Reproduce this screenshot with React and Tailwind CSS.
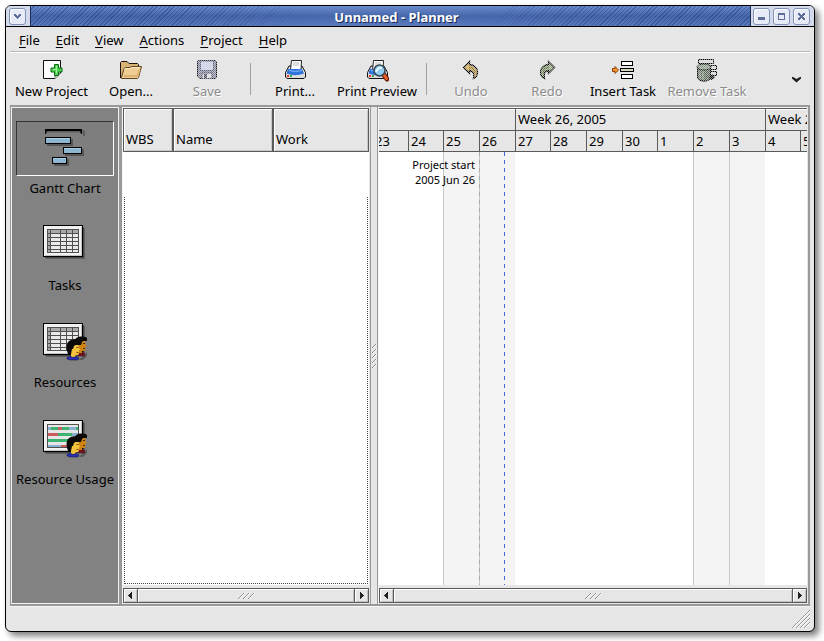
import React from "react";

const menus = ["File", "Edit", "View", "Actions", "Project", "Help"];

const days = [
  { label: "23", width: 36 },
  { label: "24", width: 35 },
  { label: "25", width: 36, off: true },
  { label: "26", width: 36, off: true },
  { label: "27", width: 35 },
  { label: "28", width: 36 },
  { label: "29", width: 36 },
  { label: "30", width: 35 },
  { label: "1", width: 36 },
  { label: "2", width: 36, off: true },
  { label: "3", width: 36, off: true },
  { label: "4", width: 35 },
  { label: "5", width: 36 },
];

const weeks = [
  { label: "", width: 143 },
  { label: "Week 26, 2005", width: 250 },
  { label: "Week 27, 2005", width: 250 },
];

function Icon({ children, size = 24 }) {
  return (
    <svg width={size} height={size} viewBox={`0 0 ${size} ${size}`} className="block shrink-0" aria-hidden="true">
      {children}
    </svg>
  );
}

/* Checkerboard laid over the icons of insensitive tools */
function Stipple({ id }) {
  return (
    <defs>
      <pattern id={id} width="2" height="2" patternUnits="userSpaceOnUse">
        <rect width="1" height="1" fill="#e6e6e6" fillOpacity="0.6" shapeRendering="crispEdges" />
        <rect x="1" y="1" width="1" height="1" fill="#e6e6e6" fillOpacity="0.6" shapeRendering="crispEdges" />
      </pattern>
    </defs>
  );
}

function NewIcon() {
  return (
    <Icon>
      <path d="M3.5 2.5H20.5V15L15 20.5H3.5Z" fill="#fdfdfd" stroke="#111" />
      <path d="M15 20.5V15.5H20.5" fill="#ddd" stroke="#777" />
      <path d="M14.5 6.5h4v3.5h3.5v4h-3.5v3.5h-4v-3.5h-3.5v-4h3.5Z" fill="#4fd04f" stroke="#0b6b14" />
      <path d="M16.5 8v7.5M13 11.5h4" stroke="#a5f5a0" />
    </Icon>
  );
}

function OpenIcon() {
  return (
    <Icon>
      <path d="M1.5 20V4.5L2.5 3.5H8L10 5.5H18.5L19.5 6.5V9" fill="#d9b277" stroke="#1a1208" />
      <path d="M2.5 19.5L5 10.5L6.5 9.5H11L13 8.5H22.5L19.5 19.5L18.5 20.5H2.5Z" fill="#f0cd93" stroke="#5c4420" />
      <path d="M5 11.5l1.5-1H11l2-1h8" fill="none" stroke="#fde9c4" />
      <path d="M5 18h13.5l2-6" fill="none" stroke="#dcb273" strokeWidth="2" />
    </Icon>
  );
}

function SaveIcon() {
  return (
    <Icon>
      <Stipple id="stipple-save" />
      <path d="M2.5 3.5l1-1h17l1 1v16l-1 1H4.5l-2-2Z" fill="#84889f" stroke="#16161c" />
      <rect x="5.5" y="3" width="13" height="9.5" fill="#cdd3ea" stroke="#5a5e78" />
      <rect x="7" y="15" width="10" height="5.5" fill="#dfe1ea" stroke="#44475a" />
      <rect x="9" y="16" width="3" height="4" fill="#44475a" />
      <rect x="2" y="2" width="20" height="19" fill="url(#stipple-save)" />
    </Icon>
  );
}

function Printer() {
  return (
    <>
      <path d="M6 8L2.5 14.5V19L4 20.5H21L22.5 19V14.5L19 8Z" fill="#dcdcdf" stroke="#111" />
      <path d="M7.5 12L8.5 2.5H18.5L18 12Z" fill="#fff" stroke="#222" />
      <path d="M10 5h6M10 7h6" stroke="#bbb" />
      <path d="M5 11h14l2 4.5q-9 3.5-17.5 0Z" fill="#2e74dc" />
      <path d="M6 12.5q6 2 13 0" fill="none" stroke="#86b5f5" />
      <rect x="4" y="17" width="2" height="2" fill="#e03528" />
      <rect x="7" y="17" width="2" height="2" fill="#36a543" />
    </>
  );
}

function PrintIcon() {
  return (
    <Icon>
      <Printer />
    </Icon>
  );
}

function PreviewIcon() {
  return (
    <Icon>
      <Printer />
      <path d="M19 17l3 4" stroke="#6f1c08" strokeWidth="5" strokeLinecap="round" />
      <path d="M19 17l2.5 3.5" stroke="#e3602d" strokeWidth="3" strokeLinecap="round" />
      <circle cx="14.5" cy="12.5" r="5.5" fill="#8fcdf2" stroke="#3b474f" strokeWidth="1.5" />
      <path d="M11 14q2-5 6-4" fill="none" stroke="#e9f8ff" strokeWidth="2" />
    </Icon>
  );
}

function UndoIcon() {
  return (
    <Icon>
      <Stipple id="stipple-undo" />
      <path d="M4.5 9.5L10.5 3.5V6.5C15 7 18.5 10 18.5 14C18.5 17 17 19.5 14.5 20.5C15.5 16 14.5 13 10.5 12.5V15.5Z" fill="#d0ab4c" stroke="#000" strokeWidth="1.3" />
      <path d="M10 9.5q6 0 6 6" fill="none" stroke="#8f722a" strokeWidth="1.5" />
      <rect x="4" y="3" width="16" height="18" fill="url(#stipple-undo)" />
    </Icon>
  );
}

function RedoIcon() {
  return (
    <Icon>
      <Stipple id="stipple-redo" />
      <path d="M19.5 9.5L13.5 3.5V6.5C9 7 5.5 10 5.5 14C5.5 17 7 19.5 9.5 20.5C8.5 16 9.5 13 13.5 12.5V15.5Z" fill="#93a878" stroke="#000" strokeWidth="1.3" />
      <path d="M14 9.5q-6 0-6 6" fill="none" stroke="#5a6d44" strokeWidth="1.5" />
      <rect x="4" y="3" width="16" height="18" fill="url(#stipple-redo)" />
    </Icon>
  );
}

function InsertIcon() {
  return (
    <Icon>
      <rect x="10.5" y="3.5" width="11" height="4" fill="#fff" stroke="#000" />
      <rect x="9.5" y="10.5" width="13" height="3" fill="#d5dcbc" stroke="#000" />
      <rect x="10.5" y="16.5" width="11" height="4" fill="#fff" stroke="#000" />
      <path d="M1.5 10.5H4V8.5L7.5 12L4 15.5V13.5H1.5Z" fill="#f59a2e" stroke="#8b3e06" />
    </Icon>
  );
}

function RemoveIcon() {
  return (
    <Icon>
      <Stipple id="stipple-remove" />
      <path d="M3.5 1.5h15v4h-15zM8.5 7.5h13v4h-13zM12.5 13.5h9v4h-9z" fill="#ddd" stroke="#000" />
      <path d="M2.5 9.5V19q0 4 6.5 4t6.5-4V9.5Z" fill="#5c6a5c" stroke="#000" />
      <ellipse cx="9" cy="9" rx="7" ry="3" fill="#8f9c8b" stroke="#111" />
      <path d="M5 13v8M8 13v9" stroke="#9cab9c" />
      <path d="M15 20.5l4-2.500" stroke="#111" strokeWidth="4" />
      <rect x="1" y="1" width="22" height="22" fill="url(#stipple-remove)" />
    </Icon>
  );
}

const tools = [
  { label: "New Project", icon: NewIcon, width: "w-[83px]" },
  { label: "Open...", icon: OpenIcon, width: "w-[76px]" },
  { label: "Save", icon: SaveIcon, width: "w-[76px]", disabled: true },
  null,
  { label: "Print...", icon: PrintIcon, width: "w-[76px]" },
  { label: "Print Preview", icon: PreviewIcon, width: "w-[88px]" },
  null,
  { label: "Undo", icon: UndoIcon, width: "w-[76px]", disabled: true },
  { label: "Redo", icon: RedoIcon, width: "w-[76px]", disabled: true },
  { label: "Insert Task", icon: InsertIcon, width: "w-[76px]" },
  { label: "Remove Task", icon: RemoveIcon, width: "w-[92px]", disabled: true },
];

function GanttIcon() {
  const bars = [
    [4, 13, 26],
    [22, 23, 19],
    [11, 33, 15],
  ];
  return (
    <Icon size={48}>
      <path d="M6 7.5H43V12" fill="none" stroke="#5c5c5c" strokeWidth="2" />
      <path d="M4 5H41V10H40L39 7H6L5 10H4Z" fill="#000" />
      {bars.map(([x, y, w]) => (
        <g key={y} shapeRendering="crispEdges">
          <rect x={x + 2} y={y + 2} width={w} height="7" fill="#555" />
          <rect x={x} y={y} width={w} height="7" fill="#000" />
          <rect x={x + 1} y={y + 1} width={w - 2} height="5" fill="#8cb6d2" />
          <rect x={x + 1} y={y + 1} width={w - 2} height="1" fill="#a9cfe6" />
        </g>
      ))}
    </Icon>
  );
}

function Panel({ y, children }) {
  return (
    <g transform={`translate(2 ${y})`} shapeRendering="crispEdges">
      <rect x="3" y="3" width="39" height="31" fill="#3f3f3f" opacity="0.5" />
      <rect x="2" y="2" width="39" height="31" fill="#4a4a4a" />
      <rect width="40" height="32" fill="#000" />
      <rect x="1" y="1" width="38" height="30" fill="#f1f1ef" />
      <path d="M2 30.5H38.5V2" fill="none" stroke="#c4c4c0" />
      <rect x="4" y="4" width="32" height="24" fill="#505050" />
      {children}
    </g>
  );
}

function Cells() {
  const columns = [
    [5, 2],
    [8, 9],
    [18, 5],
    [24, 5],
    [30, 5],
  ];
  return [5, 9, 13, 17, 21, 25].map((y, row) =>
    columns.map(([x, w], col) => (
      <rect key={`${x}-${y}`} x={x} y={y} width={w} height={row === 5 ? 2 : 3} fill={row === 0 || col === 0 ? "#a9a9a9" : "#e9e9e9"} />
    ))
  );
}

function UsageBars() {
  const bars = [
    [5, 7, 3, "#8cb0d0"],
    [8, 7, 7, "#3cb371"],
    [15, 7, 4, "#cd5c5c"],
    [19, 7, 7, "#3cb371"],
    [26, 7, 7, "#8cb0d0"],
    [33, 7, 2, "#3cb371"],
    [5, 13, 10, "#cd5c5c"],
    [15, 13, 14, "#3cb371"],
    [29, 13, 6, "#8cb0d0"],
    [5, 19, 22, "#3cb371"],
    [5, 25, 13, "#8cb0d0"],
    [18, 25, 9, "#cd5c5c"],
  ];
  return (
    <>
      <rect x="5" y="5" width="30" height="22" fill="#e6e6e6" />
      {bars.map(([x, y, w, fill]) => (
        <rect key={`${x}-${y}`} x={x} y={y} width={w} height={y === 25 ? 2 : 3} fill={fill} />
      ))}
    </>
  );
}

function People() {
  return (
    <g>
      <path d="M38 42l8-8v4l-4 4Z" fill="#333" opacity="0.5" />
      <path d="M37 34h5l2 1.5v2.5h-7Z" fill="#6e1420" />
      <path d="M38 22h6l.5 4 1 1.500-1 1 0 3-1 1.500h-2.500v2h-3Z" fill="#cf8412" />
      <path d="M33 23q2-4.500 7-4.500q5-.5 6 1.500v3h-4l-1 1-1 3h-2l-1-3Z" fill="#0c0a08" />
      <path d="M42 25h2v1h-2zM42 30h2v1h-2z" fill="#4a2a04" />
      <path d="M30 26h7.500l.5 4 1 1.500-1 1v3l-1 1.500h-2.500v2h-4.500Z" fill="#f5c23e" />
      <path d="M26 33q-1.500-7 2-10q4-3 8-1q3 1 2.500 5h-4l-1.500 1-1 3h-1l-1 5-3 0Z" fill="#0c0a08" />
      <path d="M35.500 29h2v1h-2zM35.500 34h2v1h-2z" fill="#7a4a08" />
      <path d="M26 39.500l3-1.500 3 1.500 3-1 3 1.500-1 2h-8l-3-1Z" fill="#2a2fb0" stroke="#11123c" strokeWidth="0.5" />
    </g>
  );
}

const views = [
  { label: "Gantt Chart", icon: <GanttIcon />, active: true },
  {
    label: "Tasks",
    icon: (
      <Icon size={48}>
        <Panel y={4}>
          <Cells />
        </Panel>
      </Icon>
    ),
  },
  {
    label: "Resources",
    icon: (
      <Icon size={48}>
        <Panel y={5}>
          <Cells />
        </Panel>
        <People />
      </Icon>
    ),
  },
  {
    label: "Resource Usage",
    icon: (
      <Icon size={48}>
        <Panel y={5}>
          <UsageBars />
        </Panel>
        <People />
      </Icon>
    ),
  },
];

function WindowButton({ label, children }) {
  return (
    <button
      type="button"
      aria-label={label}
      className="flex size-[17px] items-center justify-center rounded-[3px] border border-[#7f8fb5] bg-[#e6ebf7] shadow-[inset_1px_1px_0_#fff]"
    >
      <svg width="9" height="9" viewBox="0 0 9 9" shapeRendering="crispEdges" aria-hidden="true">
        {children}
      </svg>
    </button>
  );
}

function TitleBar() {
  const stripes =
    "flex-1 bg-[repeating-linear-gradient(135deg,transparent_0px,transparent_2px,#25407f_2px,#25407f_3px)] ";
  return (
    <header className="flex h-[21px] shrink-0 border-b border-black bg-[#d3daeb]">
      <div className="flex w-[25px] items-center justify-center border-r border-[#1c2c56] pr-[2px]">
        <WindowButton label="Window menu">
          <path d="M1 2h2v1h1v1h1v-1h1v-1h2v2h-1v1h-1v1h-1v1h-1v-1h-1v-1h-1v-1h-1z" fill="#5d6d96" />
        </WindowButton>
      </div>
      <div className="flex min-w-0 flex-1 items-center bg-linear-to-b from-[#6c8ccc] via-[#4767ac] to-[#5b7abd]">
        <div className={stripes + "h-full opacity-50 mask-r-from-50% mask-r-to-100%"} />
        <h1 className="pt-[2px] pl-3 text-[13px] leading-[18px] font-bold whitespace-nowrap text-white [text-shadow:1px_1px_0_#1c2c56]">
          Unnamed - Planner
        </h1>
        <div className={stripes + "h-full opacity-50 mask-l-from-50% mask-l-to-100%"} />
      </div>
      <div className="flex w-[64px] items-center justify-center gap-[3px] border-l border-[#1c2c56] pr-[2px]">
        <WindowButton label="Minimize">
          <rect x="1" y="5" width="7" height="3" fill="#5d6d96" />
        </WindowButton>
        <WindowButton label="Maximize">
          <path d="M1 1h7v7h-7zM2 3v4h5v-4z" fill="#5d6d96" fillRule="evenodd" />
        </WindowButton>
        <WindowButton label="Close">
          <path d="M1 1h2v1h1v1h1v-1h1v-1h2v2h-1v1h-1v1h1v1h1v2h-2v-1h-1v-1h-1v1h-1v1h-2v-2h1v-1h1v-1h-1v-1h-1z" fill="#5d6d96" />
        </WindowButton>
      </div>
    </header>
  );
}

function ScrollBar({ label }) {
  const end =
    "flex w-[15px] shrink-0 items-center justify-center border border-[#5a5a5a] shadow-[inset_1px_1px_0_#fff,inset_-1px_-1px_0_#c0c0c0]";
  return (
    <div role="group" aria-label={label} className="mt-[3px] flex h-[15px] shrink-0 bg-[#e6e6e6]">
      <button type="button" aria-label="Scroll left" className={end}>
        <svg width="5" height="7" viewBox="0 0 5 7" shapeRendering="crispEdges" aria-hidden="true">
          <path d="M4 0v7h-1v-1h-1v-1h-1v-1h-1v-1h1v-1h1v-1h1v-1z" fill="#222" />
        </svg>
      </button>
      <div className="flex flex-1 items-center justify-center border-y border-[#5a5a5a] shadow-[inset_1px_1px_0_#fff,inset_-1px_-1px_0_#c0c0c0]">
        <svg width="17" height="7" viewBox="0 0 17 7" aria-hidden="true">
          <path d="M1 7l6-6M6 7l6-6M11 7l6-6" stroke="#fff" />
          <path d="M0 7l6-6M5 7l6-6M10 7l6-6" stroke="#8e8e8e" />
        </svg>
      </div>
      <button type="button" aria-label="Scroll right" className={end}>
        <svg width="5" height="7" viewBox="0 0 5 7" shapeRendering="crispEdges" aria-hidden="true">
          <path d="M1 0v7h1v-1h1v-1h1v-1h1v-1h-1v-1h-1v-1h-1v-1z" fill="#222" />
        </svg>
      </button>
    </div>
  );
}

function TaskTree() {
  const cell =
    "border border-[#5a5a5a] px-[2px] pb-[3px] text-left align-bottom font-normal shadow-[inset_1px_1px_0_#fff,inset_-1px_-1px_0_#c8c8c8]";
  return (
    <section aria-label="Task list" className="flex w-[248px] shrink-0 flex-col border-t border-l border-[#f6f6f6] pr-px pb-px">
      <div className="flex flex-1 flex-col bg-white">
        <table className="w-full table-fixed border-separate border-spacing-0 bg-[#e6e6e6] leading-[18px]">
          <thead>
            <tr className="h-11">
              <th scope="col" className={cell + " w-[50px]"}>WBS</th>
              <th scope="col" className={cell + " w-[100px]"}>Name</th>
              <th scope="col" className={cell}>Work</th>
            </tr>
          </thead>
        </table>
        <div className="mx-px mt-[45px] mb-px flex-1 border border-t-0 border-dotted border-[#444]" />
      </div>
      <ScrollBar label="Scroll task list" />
    </section>
  );
}

function GanttChart() {
  return (
    <section aria-label="Gantt chart" className="flex min-w-0 flex-1 flex-col border-t border-l border-[#f6f6f6] pr-px pb-px">
      <div className="flex min-h-0 flex-1 flex-col overflow-hidden bg-white">
        <div className="flex h-[23px] shrink-0 border-y border-[#5a5a5a] bg-[#e6e6e6] leading-[21px] shadow-[inset_0_1px_0_#fff]">
          <div className="-ml-[7px] flex">
            {weeks.map((week) => (
              <div key={week.label} style={{ width: week.width }} className="shrink-0 border-l border-[#5a5a5a] pl-[2px] whitespace-nowrap">
                {week.label}
              </div>
            ))}
          </div>
        </div>
        <div className="flex h-[21px] shrink-0 border-b border-[#5a5a5a] bg-[#e6e6e6] leading-[20px]">
          <div className="-ml-[7px] flex">
            {days.map((day) => (
              <div key={day.label} style={{ width: day.width }} className="shrink-0 border-l border-[#5a5a5a] pl-[2px]">
                {day.label}
              </div>
            ))}
          </div>
        </div>
        <div className="relative flex flex-1">
          <div className="-ml-[7px] flex">
            {days.map((day) => (
              <div
                key={day.label}
                style={{ width: day.width }}
                className={day.off ? "shrink-0 border-l border-[#c8c8c8] bg-[#f4f4f4]" : "shrink-0"}
              />
            ))}
          </div>
          <div className="absolute inset-y-0 left-[100px] w-px bg-[repeating-linear-gradient(to_bottom,#aaa_0px,#aaa_4px,transparent_4px,transparent_8px)]" />
          <div className="absolute inset-y-0 left-[125px] w-px bg-[repeating-linear-gradient(to_bottom,#4169e1_0px,#4169e1_4px,transparent_4px,transparent_8px)]" />
          <p className="absolute top-[5px] left-0 w-[96px] text-right text-[11px] leading-[15px]">
            Project start
            <br />
            2005 Jun 26
          </p>
        </div>
      </div>
      <ScrollBar label="Scroll chart" />
    </section>
  );
}

export default function App() {
  return (
    <div className="h-screen bg-white pt-[5px] pr-[9px] pb-[9px] pl-[5px] font-['Noto_Sans','Open_Sans',sans-serif] text-[13px] text-black">
      <div className="flex h-full flex-col overflow-hidden rounded-[6px] border border-black bg-[#e6e6e6] shadow-[4px_4px_6px_rgba(0,0,0,0.5)]">
        <TitleBar />
        <div className="flex min-h-0 flex-1 flex-col px-1">
          <nav aria-label="Main menu" className="flex h-[25px] shrink-0 items-center border-b border-[#b8b8b8] pt-[2px] pl-px">
            {menus.map((menu) => (
              <button key={menu} type="button" className="px-2 leading-[18px]">
                <span className="underline underline-offset-2">{menu[0]}</span>
                {menu.slice(1)}
              </button>
            ))}
          </nav>
          <div role="toolbar" aria-label="Main toolbar" className="flex h-[53px] shrink-0 border-t border-white">
            {tools.map((tool, index) =>
              tool ? (
                <button
                  key={tool.label}
                  type="button"
                  disabled={tool.disabled}
                  className={
                    "flex shrink-0 flex-col items-center pt-[5px] leading-[18px] whitespace-nowrap " +
                    tool.width +
                    (tool.disabled ? " text-[#8c8c8c] [text-shadow:1px_1px_0_#fff]" : "")
                  }
                >
                  <tool.icon />
                  {tool.label}
                </button>
              ) : (
                <div key={index} className="flex w-3 shrink-0 py-[10px] pl-[5px]">
                  <div className="w-px bg-[#a0a0a0]" />
                </div>
              )
            )}
            <button type="button" aria-label="More tools" className="mr-2 ml-auto flex items-center">
              <svg width="11" height="7" viewBox="0 0 11 7" aria-hidden="true">
                <path d="M1 1l1 0 3.5 2L9 1h1v1.500L5.500 6.500L1 2.500Z" fill="#1d1d1d" />
              </svg>
            </button>
          </div>
          <main className="flex min-h-0 flex-1 border-t-2 border-r-2 border-b-2 border-l border-[#999]">
            <nav aria-label="Views" className="w-[108px] shrink-0 border border-[#f0f0f0] bg-[#828282] px-1 pt-[13px]">
              {views.map((view) => (
                <button key={view.label} type="button" className="flex w-full flex-col items-center pb-[21px]">
                  <span
                    className={
                      "flex h-[55px] w-full justify-center border pt-[2px] " +
                      (view.active ? "border-t-[#333] border-r-white border-b-white border-l-[#333] bg-[#7e7e7e]" : "border-transparent")
                    }
                  >
                    {view.icon}
                  </span>
                  <span className="mt-[3px] leading-[18px] whitespace-nowrap">{view.label}</span>
                </button>
              ))}
            </nav>
            <div className="w-[3px] shrink-0 bg-[#999]" />
            <TaskTree />
            <div className="flex w-[8px] shrink-0 items-center justify-center border-x border-[#999]">
              <svg width="5" height="26" viewBox="0 0 5 26" aria-hidden="true">
                <path d="M1 5l4-4M1 10l4-4M1 15l4-4M1 20l4-4M1 25l4-4" stroke="#fff" />
                <path d="M0 5l4-4M0 10l4-4M0 15l4-4M0 20l4-4M0 25l4-4" stroke="#888" />
              </svg>
            </div>
            <GanttChart />
          </main>
          <footer className="flex h-[25px] shrink-0 items-center justify-end border-t border-[#f6f6f6]">
            <svg width="18" height="18" viewBox="0 0 18 18" aria-hidden="true">
              <path d="M1 18L18 1M5 18L18 5M9 18L18 9M13 18L18 13" stroke="#fff" />
              <path d="M0 18L18 0M4 18L18 4M8 18L18 8M12 18L18 12" stroke="#999" />
            </svg>
          </footer>
        </div>
      </div>
    </div>
  );
}
